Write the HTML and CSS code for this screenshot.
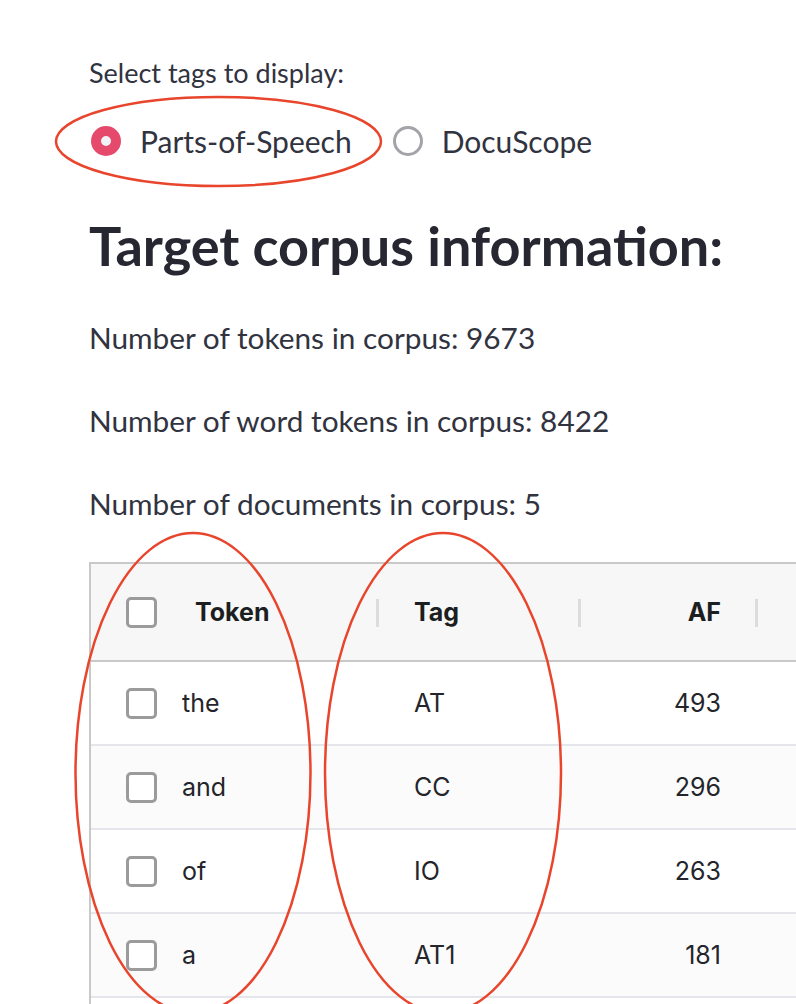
FILE: index.html
```html
<!DOCTYPE html>
<html>
<head>
<meta charset="utf-8">
<link rel="stylesheet" href="styles.css">
</head>
<body>
<div class="page">
  <div class="label">Select tags to display:</div>
  <div class="radios">
    <div class="radio"><span class="dot on"></span><span>Parts-of-Speech</span></div>
    <div class="radio"><span class="dot"></span><span>DocuScope</span></div>
  </div>
  <h3 class="heading">Target corpus information:</h3>
  <p class="info">Number of tokens in corpus: 9673</p>
  <p class="info">Number of word tokens in corpus: 8422</p>
  <p class="info">Number of documents in corpus: 5</p>
  <div class="grid">
    <div class="row head">
      <div class="c c1"><span class="box"></span><span class="htxt">Token</span></div>
      <div class="c c2"><span class="sep"></span><span>Tag</span></div>
      <div class="c c3"><span class="sep"></span><span>AF</span></div>
      <div class="c c4"><span class="sep"></span></div>
    </div>
    <div class="row">
      <div class="c c1"><span class="box"></span><span class="btxt">the</span></div>
      <div class="c c2"><span>AT</span></div>
      <div class="c c3"><span>493</span></div>
      <div class="c c4"></div>
    </div>
    <div class="row alt">
      <div class="c c1"><span class="box"></span><span class="btxt">and</span></div>
      <div class="c c2"><span>CC</span></div>
      <div class="c c3"><span>296</span></div>
      <div class="c c4"></div>
    </div>
    <div class="row">
      <div class="c c1"><span class="box"></span><span class="btxt">of</span></div>
      <div class="c c2"><span>IO</span></div>
      <div class="c c3"><span>263</span></div>
      <div class="c c4"></div>
    </div>
    <div class="row alt">
      <div class="c c1"><span class="box"></span><span class="btxt">a</span></div>
      <div class="c c2"><span>AT1</span></div>
      <div class="c c3"><span>181</span></div>
      <div class="c c4"></div>
    </div>
    <div class="row empty"></div>
  </div>
</div>
<svg class="marks" width="796" height="1004" viewBox="0 0 796 1004">
  <ellipse cx="218.5" cy="141.5" rx="162.5" ry="44.5" />
  <ellipse cx="193" cy="773" rx="117.5" ry="240" />
  <ellipse cx="443" cy="773" rx="118" ry="240" />
</svg>
</body>
</html>
```

FILE: styles.css
```css
html, body {
  margin: 0;
  padding: 0;
  background: #ffffff;
  overflow: hidden;
  width: 796px;
  height: 1004px;
}
.page {
  position: relative;
  padding: 53px 0 0 89px;
  font-family: "Lato", "Noto Sans", sans-serif;
  color: #31333f;
}
.label {
  font-size: 27px;
  line-height: 40px;
  height: 40px;
}
.radios {
  display: flex;
  align-items: center;
  gap: 41px;
  margin-top: 18px;
  height: 60px;
  margin-left: 2px;
}
.radio {
  display: flex;
  align-items: center;
  gap: 19px;
  font-size: 30px;
}
.dot {
  width: 30px;
  height: 30px;
  border-radius: 50%;
  box-sizing: border-box;
  border: 3px solid #a3a3a8;
  background: #fff;
  display: inline-block;
}
.dot.on {
  border: 10px solid #e5496b;
  background: #f0f2f6;
}
.heading {
  margin: 39px 0 0 0;
  font-size: 54px;
  line-height: 72px;
  font-weight: 700;
  color: #262730;
}
.info {
  margin: 31px 0 0 0;
  font-size: 29.8px;
  line-height: 50px;
}
.info + .info {
  margin-top: 33px;
}
.grid {
  margin-top: 33px;
  width: 760px;
  border-top: 2px solid #c9c9c9;
  border-left: 2px solid #c9c9c9;
  font-family: "Inter", "Liberation Sans", sans-serif;
  font-size: 25px;
  color: #24252b;
}
.row {
  display: flex;
  height: 82px;
  border-bottom: 2px solid #e4e6ec;
  background: #fff;
}
.row.alt {
  background: #fbfbfb;
}
.row.empty {
  border-bottom: none;
}
.row.head {
  height: 96px;
  background: #f7f7f7;
  border-bottom: 2px solid #c9c9c9;
  font-weight: 700;
  color: #1d1e22;
}
.c {
  display: flex;
  align-items: center;
  position: relative;
  box-sizing: border-box;
}
.c1 {
  width: 285px;
  padding-left: 35px;
}
.c2 {
  width: 202px;
  padding-left: 38px;
}
.c3 {
  width: 177px;
  justify-content: flex-end;
  padding-right: 34px;
}
.c4 {
  flex: 1;
}
.sep {
  position: absolute;
  left: 0;
  top: 35px;
  width: 3px;
  height: 28px;
  background: #dcdcdc;
}
.box {
  width: 31px;
  height: 31px;
  box-sizing: border-box;
  border: 3px solid #9b9b9b;
  border-radius: 5px;
  background: #fff;
  flex: none;
}
.htxt {
  margin-left: 38px;
}
.btxt {
  margin-left: 25px;
}
.marks {
  position: absolute;
  left: 0;
  top: 0;
  pointer-events: none;
}
.marks ellipse {
  fill: none;
  stroke: #e8452c;
  stroke-width: 2.5;
}
```
